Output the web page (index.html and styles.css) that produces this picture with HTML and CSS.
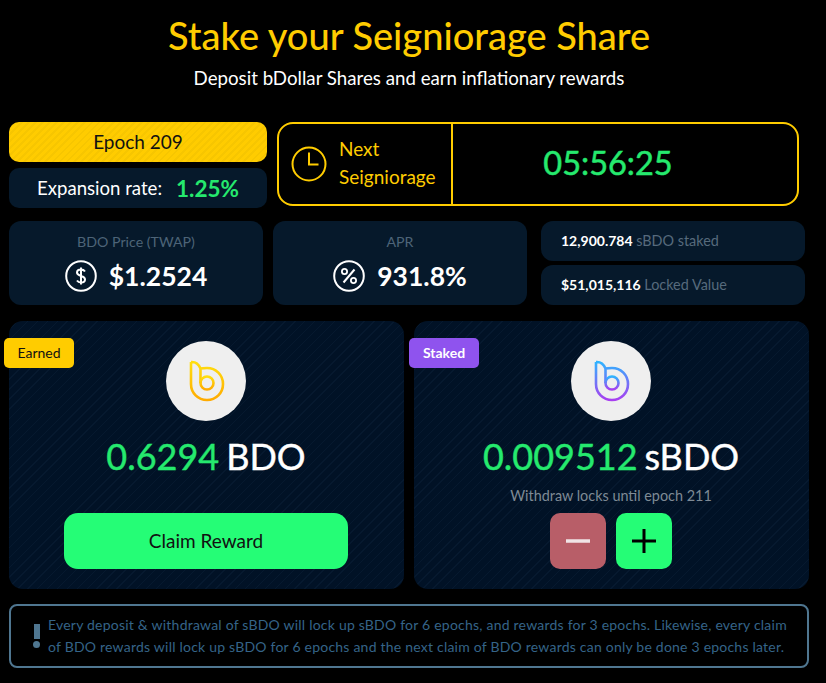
FILE: index.html
```html
<!DOCTYPE html>
<html>
<head>
    <meta charset="utf-8" />
    <title>Stake your Seigniorage Share</title>
    <link rel="stylesheet" href="styles.css">
</head>
<body>
    <svg class="defs" width="0" height="0">
        <defs>
            <linearGradient id="gradYellow" x1="0" y1="0" x2="0" y2="1">
                <stop offset="0" stop-color="#ffdf10" />
                <stop offset="1" stop-color="#ffab00" />
            </linearGradient>
            <linearGradient id="gradBlue" x1="0" y1="0" x2="0" y2="1">
                <stop offset="0" stop-color="#2fb4ff" />
                <stop offset="1" stop-color="#a83ff0" />
            </linearGradient>
        </defs>
    </svg>

    <h1 class="title">Stake your Seigniorage Share</h1>
    <p class="subtitle">Deposit bDollar Shares and earn inflationary rewards</p>

    <div class="row-top">
        <div class="epoch-col">
            <div class="epoch">Epoch 209</div>
            <div class="expansion">Expansion rate: <span class="rate">1.25%</span></div>
        </div>
        <div class="next">
            <div class="next-left">
                <svg class="clock" width="36" height="36" viewBox="0 0 36 36" fill="none">
                    <circle cx="18" cy="18" r="16.5" stroke="#ffcc00" stroke-width="2" />
                    <path d="M18 6.5V18.5H27.5" stroke="#ffcc00" stroke-width="2" />
                </svg>
                <div class="next-text">Next<br />Seigniorage</div>
            </div>
            <div class="timer">05:56:25</div>
        </div>
    </div>

    <div class="row-stats">
        <div class="stat">
            <div class="stat-label">BDO Price (TWAP)</div>
            <div class="stat-value">
                <svg width="32" height="32" viewBox="0 0 32 32" fill="none">
                    <circle cx="16" cy="16" r="14.8" stroke="#fff" stroke-width="2" />
                    <path d="M20 11.5C19 10 17.500 9.500 16 9.500C13.500 9.500 12 10.800 12 12.600C12 17 20 15 20 19.400C20 21.200 18.500 22.500 16 22.500C14.500 22.500 13 22 12 20.500M16 7.500V24.500" stroke="#fff" stroke-width="2" />
                </svg>
                <span>$1.2524</span>
            </div>
        </div>
        <div class="stat">
            <div class="stat-label">APR</div>
            <div class="stat-value">
                <svg width="32" height="32" viewBox="0 0 32 32" fill="none">
                    <circle cx="16" cy="16" r="14.8" stroke="#fff" stroke-width="2" />
                    <circle cx="11.500" cy="11.500" r="2.600" stroke="#fff" stroke-width="1.800" />
                    <circle cx="20.500" cy="20.500" r="2.600" stroke="#fff" stroke-width="1.800" />
                    <path d="M21.500 9.500L10.500 22.500" stroke="#fff" stroke-width="2" />
                </svg>
                <span>931.8%</span>
            </div>
        </div>
        <div class="stat-small-col">
            <div class="stat-small"><b>12,900.784</b> sBDO staked</div>
            <div class="stat-small"><b>$51,015,116</b> Locked Value</div>
        </div>
    </div>

    <div class="row-cards">
        <div class="card">
            <div class="badge badge-earned">Earned</div>
            <div class="logo">
                <svg width="80" height="80" viewBox="0 0 80 80" fill="none" stroke="url(#gradYellow)" stroke-width="2.600">
                    <path d="M25 21H26C30 21 33 24 34.500 27.500V42M25 21V43C25 52 32 59 41 59C50 59 57 52 57 43C57 34 50 27 41 27C39 27 36.500 27 34.500 27.500" />
                    <circle cx="41" cy="42" r="6.500" />
                </svg>
            </div>
            <div class="amount"><span class="num">0.6294</span><span>BDO</span></div>
            <div class="claim">Claim Reward</div>
        </div>
        <div class="card">
            <div class="badge badge-staked">Staked</div>
            <div class="logo">
                <svg width="80" height="80" viewBox="0 0 80 80" fill="none" stroke="url(#gradBlue)" stroke-width="2.600">
                    <path d="M25 21H26C30 21 33 24 34.500 27.500V42M25 21V43C25 52 32 59 41 59C50 59 57 52 57 43C57 34 50 27 41 27C39 27 36.500 27 34.500 27.500" />
                    <circle cx="41" cy="42" r="6.500" />
                </svg>
            </div>
            <div class="amount"><span class="num">0.009512</span><span>sBDO</span></div>
            <div class="locks">Withdraw locks until epoch 211</div>
            <div class="actions">
                <div class="action action-minus">
                    <svg width="24" height="24" viewBox="0 0 24 24"><path d="M0 12H24" stroke="#f0e4e6" stroke-width="3.500" /></svg>
                </div>
                <div class="action action-plus">
                    <svg width="24" height="24" viewBox="0 0 24 24"><path d="M0 12H24M12 0V24" stroke="#000" stroke-width="3" /></svg>
                </div>
            </div>
        </div>
    </div>

    <div class="notice">
        <div class="notice-icon"><span class="bar"></span><span class="dot"></span></div>
        <div class="notice-text">Every deposit &amp; withdrawal of sBDO will lock up sBDO for 6 epochs, and rewards for 3 epochs. Likewise, every claim of BDO rewards will lock up sBDO for 6 epochs and the next claim of BDO rewards can only be done 3 epochs later.</div>
    </div>
</body>
</html>
```

FILE: styles.css
```css
* {
    padding: 0;
    margin: 0;
    box-sizing: border-box;
}

body {
    width: 826px;
    height: 683px;
    padding: 0 9px;
    overflow: hidden;
    background: #000;
    color: #fff;
    font-family: "Lato", "Liberation Sans", sans-serif;
}

.defs {
    display: block;
    height: 0;
}

.title {
    height: 44px;
    margin-top: 13px;
    width: 800px;
    color: #ffcc00;
    font-size: 38px;
    font-weight: 500;
    line-height: 44px;
    text-align: center;
}

.subtitle {
    height: 24px;
    margin-top: 9px;
    width: 800px;
    font-size: 18.7px;
    line-height: 24px;
    text-align: center;
}

.row-top {
    display: flex;
    gap: 10px;
    margin-top: 32px;
}

.epoch-col {
    width: 258px;
}

.epoch {
    height: 40px;
    background: repeating-linear-gradient(135deg, #ffcc00 0, #ffcc00 3px, #f7c600 3px, #f7c600 5px);
    border-radius: 10px;
    color: #111;
    font-size: 19px;
    line-height: 39px;
    text-align: center;
}

.expansion {
    display: flex;
    align-items: center;
    justify-content: center;
    gap: 14px;
    height: 40px;
    margin-top: 6px;
    background: #06192b;
    border-radius: 10px;
    font-size: 18.600px;
}

.rate {
    color: #25e96e;
    font-size: 22.500px;
    font-weight: 700;
}

.next {
    display: flex;
    width: 522px;
    height: 84px;
    border: 2px solid #ffcc00;
    border-radius: 16px;
}

.next-left {
    display: flex;
    align-items: center;
    width: 174px;
    padding-left: 12px;
    border-right: 2px solid #ffcc00;
}

.next-text {
    margin-left: 12px;
    padding-bottom: 2px;
    color: #ffcc00;
    font-size: 19px;
    line-height: 28px;
}

.timer {
    flex: 1;
    padding-right: 34px;
    color: #25e96e;
    font-size: 32.500px;
    -webkit-text-stroke: 0.5px #25e96e;
    line-height: 78px;
    text-align: center;
}

.row-stats {
    display: flex;
    margin-top: 13px;
}

.stat {
    width: 254px;
    height: 84px;
    margin-right: 10px;
    padding-top: 11px;
    background: #06192b;
    border-radius: 12px;
    text-align: center;
}

.stat + .stat {
    margin-right: 14px;
}

.stat-label {
    color: #4d6478;
    font-size: 14.200px;
    line-height: 20px;
}

.stat-value {
    display: flex;
    align-items: center;
    justify-content: center;
    gap: 12px;
    margin-top: 7px;
    font-size: 26.500px;
    font-weight: 700;
    line-height: 34px;
}

.stat-small-col {
    display: flex;
    flex-direction: column;
    gap: 4px;
    width: 264px;
}

.stat-small {
    height: 40px;
    padding-left: 20px;
    background: #06192b;
    border-radius: 12px;
    color: #566a7c;
    font-size: 14.400px;
    line-height: 40px;
}

.stat-small b {
    color: #fff;
    font-weight: 700;
    font-size: 14px;
}

.row-cards {
    display: flex;
    gap: 10px;
    margin-top: 16px;
}

.card {
    position: relative;
    width: 395px;
    height: 268px;
    padding: 20px 1px 0 0;
    background: repeating-linear-gradient(135deg, #011226 0, #011226 6px, #06192f 6px, #06192f 7px);
    border-radius: 14px;
    text-align: center;
}

.badge {
    position: absolute;
    top: 17px;
    left: -5px;
    width: 70px;
    height: 30px;
    border-radius: 5px;
    font-size: 14px;
    line-height: 29px;
}

.badge-earned {
    background: #ffcc00;
    color: #111;
}

.badge-staked {
    background: #8f53ee;
    color: #fff;
    font-weight: 700;
}

.logo {
    width: 80px;
    height: 80px;
    margin: 0 auto;
    background: #efefef;
    border-radius: 50%;
}

.logo svg {
    display: block;
}

.amount {
    display: flex;
    justify-content: center;
    gap: 7px;
    height: 48px;
    margin-top: 11px;
    font-size: 36px;
    -webkit-text-stroke: 0.4px;
    line-height: 48px;
}

.num {
    color: #25e96e;
}

.claim {
    width: 284px;
    height: 56px;
    margin: 33px auto 0;
    background: #25fd76;
    border-radius: 14px;
    color: #111;
    font-size: 19px;
    line-height: 55px;
}

.locks {
    height: 20px;
    margin-top: 6px;
    color: #7e8a95;
    font-size: 14.400px;
    line-height: 20px;
}

.actions {
    display: flex;
    justify-content: center;
    gap: 10px;
    margin-top: 7px;
}

.action {
    display: flex;
    align-items: center;
    justify-content: center;
    width: 56px;
    height: 56px;
    border-radius: 10px;
}

.action-minus {
    background: #b85e68;
}

.action-plus {
    background: #25fd76;
}

.notice {
    display: flex;
    align-items: center;
    width: 800px;
    height: 64px;
    margin-top: 15px;
    padding: 0 18px 0 22px;
    border: 2px solid #4f7690;
    border-radius: 8px;
}

.notice-icon {
    display: flex;
    flex-direction: column;
    align-items: center;
    width: 7px;
    margin-right: 8px;
}

.notice-icon .bar {
    width: 6px;
    height: 15px;
    background: #4f7690;
}

.notice-icon .dot {
    width: 7px;
    height: 7px;
    margin-top: 2px;
    background: #4f7690;
    border-radius: 50%;
}

.notice-text {
    color: #356488;
    font-size: 14px;
    line-height: 22px;
    letter-spacing: 0.22px;
}
```
